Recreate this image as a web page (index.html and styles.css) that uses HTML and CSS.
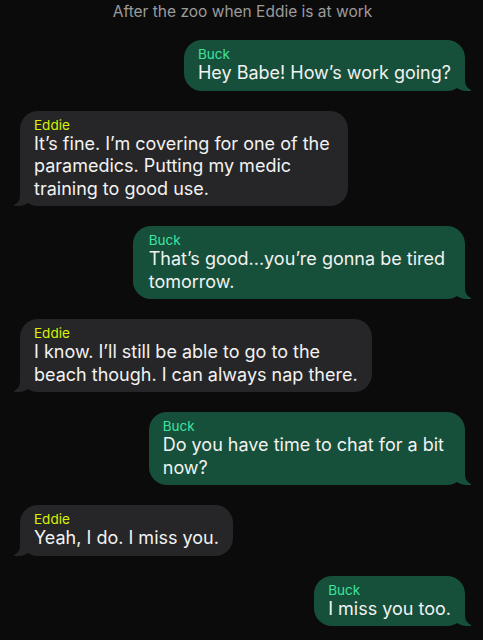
FILE: index.html
```html
<!DOCTYPE html>
<html lang="en">
<head>
<meta charset="utf-8">
<title>After the zoo</title>
<link rel="stylesheet" href="styles.css">
</head>
<body>
<main class="chat">
  <div class="title">After the zoo when Eddie is at work</div>
  <div class="msg sent">
    <div class="name">Buck</div>
    <div class="text">Hey Babe! How’s work going?</div>
  </div>
  <div class="msg recv roomy">
    <div class="name">Eddie</div>
    <div class="text">It’s fine. I’m covering for one of the<br>paramedics. Putting my medic<br>training to good use.</div>
  </div>
  <div class="msg sent wide">
    <div class="name">Buck</div>
    <div class="text">That’s good...you’re gonna be tired<br>tomorrow.</div>
  </div>
  <div class="msg recv">
    <div class="name">Eddie</div>
    <div class="text">I know. I’ll still be able to go to the<br>beach though. I can always nap there.</div>
  </div>
  <div class="msg sent wider">
    <div class="name">Buck</div>
    <div class="text">Do you have time to chat for a bit<br>now?</div>
  </div>
  <div class="msg recv">
    <div class="name">Eddie</div>
    <div class="text">Yeah, I do. I miss you.</div>
  </div>
  <div class="msg sent">
    <div class="name">Buck</div>
    <div class="text">I miss you too.</div>
  </div>
</main>
</body>
</html>
```

FILE: styles.css
```css
html, body {
  margin: 0;
  padding: 0;
  background: #0b0b0b;
}

body {
  font-family: Inter, "Noto Sans", "Liberation Sans", sans-serif;
  color: #f2f2f2;
}

.chat {
  display: flex;
  flex-direction: column;
  gap: 20px;
  padding: 2px 18px 12px 20px;
}

.title {
  text-align: center;
  color: #9b9b9b;
  font-size: 15.5px;
  line-height: 20px;
  margin-bottom: -2px;
}

.msg {
  position: relative;
  padding: 6px 14px 6px 14px;
  border-radius: 18px;
  white-space: nowrap;
}

.roomy {
  padding-right: 18px;
}

.wide {
  padding-left: 16px;
  padding-right: 20px;
}

.wider {
  padding-right: 21px;
}

.name {
  font-size: 13.5px;
  line-height: 16px;
}

.text {
  font-size: 18px;
  line-height: 22.5px;
}

.sent {
  align-self: flex-end;
  background: #16503a;
}

.sent .name {
  color: #3fe3a0;
}

.recv {
  align-self: flex-start;
  background: #262628;
}

.recv .name {
  color: #d9f200;
}

.msg::before,
.msg::after {
  content: "";
  position: absolute;
  bottom: 0;
  height: 20px;
}

.sent::before {
  right: -6px;
  width: 20px;
  background: #16503a;
  border-bottom-left-radius: 16px 14px;
}

.sent::after {
  right: -10px;
  width: 10px;
  background: #0b0b0b;
  border-bottom-left-radius: 10px;
}

.recv::before {
  left: -6px;
  width: 20px;
  background: #262628;
  border-bottom-right-radius: 16px 14px;
}

.recv::after {
  left: -10px;
  width: 10px;
  background: #0b0b0b;
  border-bottom-right-radius: 10px;
}
```
